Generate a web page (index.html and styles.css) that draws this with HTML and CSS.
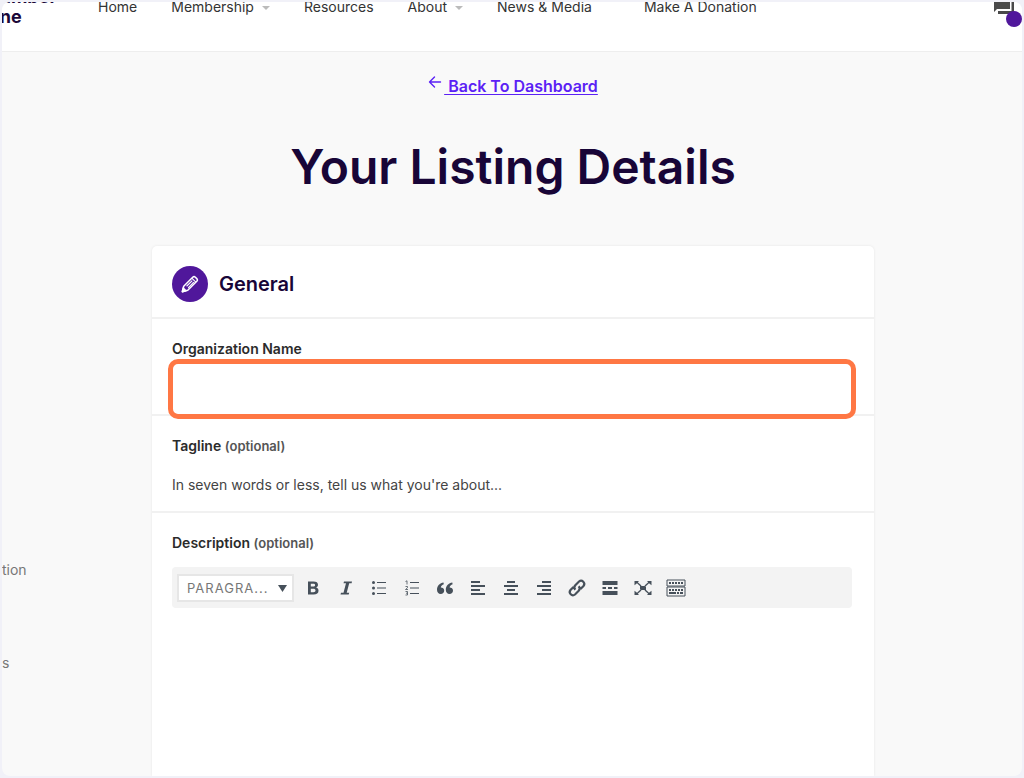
FILE: index.html
```html
<!DOCTYPE html>
<html lang="en">
<head>
<meta charset="utf-8">
<meta name="viewport" content="width=device-width, initial-scale=1">
<title>Your Listing Details</title>
<link rel="stylesheet" href="styles.css">
</head>
<body>
<div class="app">
  <header class="topbar">
    <a class="brand" href="#">Number<br>One</a>
    <nav class="menu">
      <a href="#">Home</a>
      <a href="#" class="has-sub">Membership</a>
      <a href="#">Resources</a>
      <a href="#" class="has-sub">About</a>
      <a href="#">News &amp; Media</a>
      <a href="#" class="donate">Make A Donation</a>
    </nav>
    <button class="messages" type="button" aria-label="Messages">
      <svg width="20" height="20" viewBox="0 0 20 20" fill="#4a4a4a"><path d="M0 0h16v12H3l-3 3z"/><path d="M17.500 3H20v17l-3-3H4v-3h13.500z"/></svg>
      <span class="dot"></span>
    </button>
  </header>

  <main class="page">
    <a class="back" href="#"><svg width="14" height="14" viewBox="0 0 14 14" fill="none" stroke="currentColor" stroke-width="1.400" stroke-linecap="round" stroke-linejoin="round"><path d="M12.500 7H1.500M6.500 2l-5 5 5 5"/></svg><span class="back-text">&nbsp;Back To Dashboard</span></a>
    <h1 class="title">Your Listing Details</h1>

    <nav class="side">
      <a href="#">tion</a>
      <a href="#">s</a>
    </nav>

    <form class="card">
      <div class="card-head">
        <span class="badge">
          <svg width="18" height="18" viewBox="0 0 20 20" fill="none" stroke="#fff" stroke-width="1.700" stroke-linejoin="round"><path d="M1.500 18.500L3 12.500 13 2.500a2.200 2.200 0 0 1 3 0L17.500 4a2.200 2.200 0 0 1 0 3L7.500 17z"/><path d="M12 3.500L16.500 8M6.200 12.500L12.500 6.200M8 14.200L14.200 8" stroke-width="1.200"/><path d="M1.500 18.500l1-4 3 3z" fill="#fff"/></svg>
        </span>
        <h2>General</h2>
      </div>
      <div class="field">
        <label for="org">Organization Name</label>
        <div class="highlight"><input id="org" type="text"></div>
      </div>
      <div class="field">
        <label for="tagline">Tagline <small>(optional)</small></label>
        <input id="tagline" type="text" placeholder="In seven words or less, tell us what you're about...">
      </div>
      <div class="field editor">
        <label for="desc">Description <small>(optional)</small></label>
        <div class="toolbar">
          <div class="format">
            <select aria-label="Text format"><option>PARAGRA...</option></select>
            <svg width="9" height="7" viewBox="0 0 9 7"><path d="M0 0h9L4.500 7z" fill="#46505a"/></svg>
          </div>
          <button type="button" aria-label="Bold"><svg viewBox="0 0 20 20"><path fill-rule="evenodd" d="M5 3.500h5.500c3 0 4.500 1.200 4.500 3.300 0 1.500-.8 2.400-2 2.800 1.600.4 2.500 1.500 2.500 3.100 0 2.500-1.800 3.800-4.800 3.800H5zM7.800 5.700v2.900H10c1.400 0 2.100-.5 2.100-1.500S11.500 5.700 10 5.700zM7.800 10.800v3.400h2.500c1.500 0 2.200-.6 2.200-1.700s-.8-1.700-2.300-1.700z"/></svg></button>
          <button type="button" aria-label="Italic"><svg viewBox="0 0 20 20"><path d="M8 3.500h8l-.4 1.700h-2.400L10.700 14.800h2.500l-.5 1.700H4.500l.5-1.700h2.500L10 5.200H7.500z"/></svg></button>
          <button type="button" aria-label="Bulleted list"><svg viewBox="0 0 20 20"><circle cx="4.500" cy="4.500" r="1.500"/><circle cx="4.500" cy="10" r="1.500"/><circle cx="4.500" cy="15.500" r="1.500"/><path d="M8 4h9v1H8zM8 9.500h9v1H8zM8 15h9v1H8z"/></svg></button>
          <button type="button" aria-label="Numbered list"><svg viewBox="0 0 20 20"><path d="M8 4h9v1H8zM8 9.500h9v1H8zM8 15h9v1H8z"/><path d="M3.500 3.500L5 2.800V6.500M3.500 8.500h2v1.200l-2 1.800h2.500M3.500 13.500h2v3.500h-2M4 15.200h1.500" fill="none" stroke="#46505a" stroke-width=".8"/></svg></button>
          <button type="button" aria-label="Blockquote"><svg viewBox="0 0 20 20"><path d="M8.500 4.500C5 5 2 7.800 2 11.800 2 14.300 3.500 16 5.700 16c2 0 3.500-1.400 3.500-3.400 0-2.100-1.500-3.200-3.400-3.200.3-1.600 1.400-2.600 3-3.200zM17.300 4.500c-3.500.5-6.500 3.300-6.500 7.300 0 2.500 1.500 4.200 3.700 4.200 2 0 3.500-1.400 3.500-3.400 0-2.100-1.500-3.200-3.400-3.200.3-1.600 1.400-2.600 3-3.200z"/></svg></button>
          <button type="button" aria-label="Align left"><svg viewBox="0 0 20 20"><path d="M3 3h9v2H3zM3 7h14v2H3zM3 11h9v2H3zM3 15h14v2H3z"/></svg></button>
          <button type="button" aria-label="Align center"><svg viewBox="0 0 20 20"><path d="M6 3h8v2H6zM3 7h14v2H3zM6 11h8v2H6zM3 15h14v2H3z"/></svg></button>
          <button type="button" aria-label="Align right"><svg viewBox="0 0 20 20"><path d="M8 3h9v2H8zM3 7h14v2H3zM8 11h9v2H8zM3 15h14v2H3z"/></svg></button>
          <button type="button" aria-label="Insert link"><svg viewBox="0 0 20 20"><path d="M8.300 11.700a3.300 3.300 0 0 1 0-4.500l3.700-3.700a3.200 3.200 0 0 1 4.500 4.500l-3 3M11.700 8.300a3.300 3.300 0 0 1 0 4.500L8 16.500A3.200 3.200 0 0 1 3.500 12l3-3" fill="none" stroke="#46505a" stroke-width="2.200"/></svg></button>
          <button type="button" aria-label="Read more tag"><svg viewBox="0 0 20 20"><path d="M2.500 3h15v4h-15zM2.500 9H6v2H2.500zM8 9h4v2H8zM14 9h3.500v2H14zM2.500 13h15v4h-15z"/></svg></button>
          <button type="button" aria-label="Fullscreen"><svg viewBox="0 0 20 20"><path d="M7 8h6v4H7zM1.500 3H6L4.800 4.200 8.500 7.500l-1 1L4 5.300l-2.500 2zM18.500 3H14l1.200 1.200L11.500 7.500l1 1L16 5.300l2.500 2zM1.500 17H6l-1.200-1.200 3.700-3.300-1-1L4 14.700l-2.500-2zM18.500 17H14l1.200-1.200-3.700-3.300 1-1 3.500 3.200 2.500-2z"/></svg></button>
          <button type="button" aria-label="Toolbar toggle"><svg viewBox="0 0 20 20"><path d="M1 2h18v6H1zM1 9h18v9H1z" fill="none" stroke="#46505a"/><path d="M3 4h2v2H3zM6 4h2v2H6zM9 4h2v2H9zM12 4h2v2h-2zM15 4h2v2h-2zM3 11h2v2H3zM6 11h2v2H6zM9 11h2v2H9zM12 11h2v2h-2zM15 11h2v2h-2zM3 14h7v2H3zM11 14h2v2h-2zM14 14h3v2h-3z"/></svg></button>
        </div>
        <textarea id="desc"></textarea>
      </div>
    </form>
  </main>
</div>
</body>
</html>
```
FILE: styles.css
```css
* { box-sizing: border-box; }

body {
  margin: 0;
  padding: 2px;
  background: #f1f1f8;
  color: #333;
  font: 14px/20px Inter, "Liberation Sans", sans-serif;
}

a { color: inherit; text-decoration: none; }
svg { display: block; }

.app {
  display: flex;
  flex-direction: column;
  height: calc(100vh - 4px);
  overflow: hidden;
  border-radius: 8px;
  background: #f9f9f9;
}

/* Header, scrolled partly out of view */
.topbar {
  display: flex;
  flex: none;
  align-items: flex-end;
  height: 50px;
  padding-bottom: 24px;
  background: #fff;
  border-bottom: 1px solid #eee;
}

.brand {
  width: 112px;
  margin-left: -16px;
  color: #1a0738;
  font-size: 18px;
  font-weight: 700;
  line-height: 20px;
}

.menu {
  display: flex;
  flex: 1;
  gap: 34px;
  padding-bottom: 10px;
  white-space: nowrap;
}

.has-sub::after {
  content: "";
  display: inline-block;
  margin-left: 8px;
  vertical-align: middle;
  border: 4px solid transparent;
  border-top-color: #bbb;
  border-bottom: 0;
}

.donate { margin-left: 18px; }

.messages {
  position: relative;
  margin: 0 8px 10px 0;
  padding: 0;
  border: 0;
  background: none;
}

.dot {
  position: absolute;
  right: -8px;
  bottom: -10px;
  width: 16px;
  height: 16px;
  border-radius: 50%;
  background: #50179b;
}

/* Page */
.page {
  display: grid;
  flex: 1;
  grid-template-columns: 1fr minmax(0, 722px) 1fr;
  grid-template-rows: auto auto 1fr;
  min-height: 0;
  padding: 23px 0 0 2px;
}

.back {
  display: flex;
  grid-column: 2;
  justify-self: center;
  gap: 2px;
  color: #5b21f5;
  font-size: 16px;
  font-weight: 600;
  line-height: 22px;
}

.back-text { text-decoration: underline; text-underline-offset: 2px; }

.title {
  grid-column: 1 / -1;
  margin: 39px 0 48px;
  color: #180537;
  font-size: 48px;
  font-weight: 600;
  line-height: 62px;
  text-align: center;
}

.side {
  display: flex;
  flex-direction: column;
  grid-column: 1;
  gap: 73px;
  margin-left: -2px;
  padding-top: 314px;
  color: #777;
}

.card {
  display: flex;
  flex-direction: column;
  grid-column: 2;
  border-radius: 5px 5px 0 0;
  background: #fff;
  box-shadow: 0 0 3px rgba(0, 0, 0, 0.08);
}

.card-head {
  display: flex;
  align-items: center;
  gap: 11px;
  padding: 20px 20px 15px;
  border-bottom: 2px solid #f1f1f1;
}

.badge {
  display: grid;
  place-items: center;
  width: 36px;
  height: 36px;
  border-radius: 50%;
  background: #50179b;
}

h2 {
  margin: 0;
  color: #180537;
  font-size: 20px;
  font-weight: 600;
  line-height: 24px;
}

.field {
  display: flex;
  flex-direction: column;
  gap: 8px;
  padding: 20px 22px 7px 20px;
  border-bottom: 2px solid #f1f1f1;
}

label { font-weight: 600; color: #2b2b2b; }
small { font-size: 13px; color: #555; }

input, textarea {
  width: 100%;
  padding: 0;
  border: 0;
  outline: 0;
  background: none;
  color: #444;
  font: inherit;
}

input { height: 40px; }
input::placeholder { color: #444; opacity: 1; }

.highlight { position: relative; }

.highlight::after {
  content: "";
  position: absolute;
  inset: -8px -4px -12px;
  border: 5px solid #ff7744;
  border-radius: 10px;
  pointer-events: none;
}

.editor { flex: 1; gap: 14px; border-bottom: 0; }

.toolbar {
  display: flex;
  align-items: center;
  height: 41px;
  padding-left: 5px;
  border-radius: 4px;
  background: #f3f3f3;
}

.format { position: relative; width: 117px; margin-right: 2px; }

.format select {
  display: block;
  width: 100%;
  height: 28px;
  padding: 0 8px;
  appearance: none;
  border: 2px solid #e6e6e6;
  border-radius: 0;
  background: #fff;
  color: #777;
  font: inherit;
  font-size: 13px;
  letter-spacing: 1px;
}

.format svg { position: absolute; right: 7px; top: 11px; }

.toolbar button {
  display: grid;
  place-items: center;
  width: 33px;
  height: 30px;
  padding: 0;
  border: 0;
  background: none;
  fill: #46505a;
}

.toolbar button svg { width: 20px; height: 20px; }
.editor textarea { flex: 1; resize: none; }
```
